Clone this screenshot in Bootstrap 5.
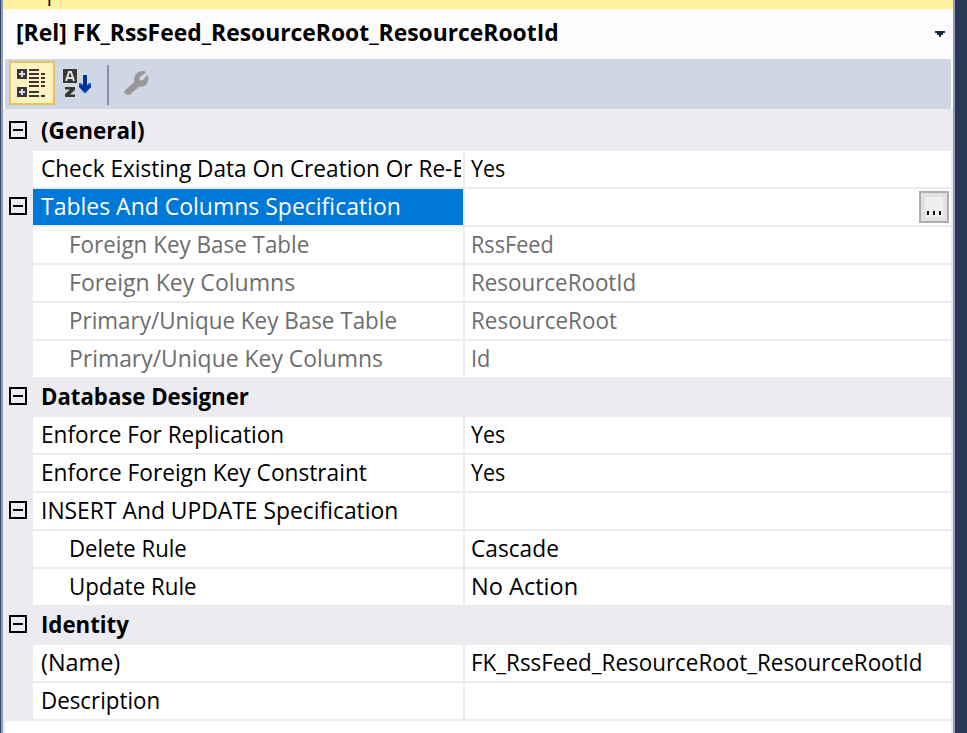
<!DOCTYPE html>
<html lang="en">
<head>
<meta charset="utf-8">
<meta name="viewport" content="width=device-width, initial-scale=1">
<title>Properties</title>
<link href="https://cdn.jsdelivr.net/npm/bootstrap@5.3.0/dist/css/bootstrap.min.css" rel="stylesheet">
<style>
body{background:#293955;font-family:"Open Sans","Noto Sans",sans-serif;font-size:24px;line-height:36px;color:#000}
.pane{width:955px;height:733px;background:#fff;border-left:3px solid #8e9bbc;border-right:2px solid #8e9bbc}
.pane::before{content:"";position:absolute;left:-3px;top:0;width:1px;height:733px;background:#35496a}
.title-strip{height:9px;background:#fff09c;line-height:20px}
.title-strip span{position:absolute;left:11px;top:-19px}
.object-bar{height:50px;background:#fcfcfc;padding-left:13px;padding-right:6px;padding-bottom:2px;border-bottom:2px solid #fff;margin-right:2px}
.tools{height:50px;background:#cfd6e5;margin:0 2px;padding-bottom:2px}
.cat-btn{width:46px;height:44px;margin-left:4px;padding-right:2px;background:#fff2be;border:2px solid #e5c365}
.grid-area{background:#ececf0;line-height:34px}
.rest{height:12px;background:#fff;margin:0 2px}
.gutter{width:30px;flex:none;padding-left:6px;padding-bottom:2px}
.category .gutter{padding-bottom:4px}
.prop{height:38px;border-bottom:2px solid #ececf0;margin-right:2px}
.prop.category{border:0}
.prop.category:first-child{height:42px;padding:4px 0 2px}
.category:first-child .gutter{padding-bottom:2px}
.label-cell{width:432px;flex:none;border-right:2px solid #ececf0;background:#fff;padding-left:8px}
.label-cell.sub{padding-left:36px}
.label-text{margin-right:2px}
.value-cell{background:#fff;padding-left:6px;min-width:0}
.value-cell .fit{margin-bottom:2px}
.label-cell.picked{background:#0078d7;color:#fff;background-clip:padding-box}
.dim{color:#6d6d6d}
.fit{display:inline-block;white-space:nowrap;transform-origin:0 50%}
.dots{width:30px;height:32px;background:#e1e1e1;border:2px solid #adadad;margin-right:2px}
svg{display:block;flex:none}
</style>
<script src="https://cdn.jsdelivr.net/npm/bootstrap@5.3.0/dist/js/bootstrap.bundle.min.js"></script>
</head>
<body class="m-0 overflow-hidden">
<main class="pane position-relative">
  <header class="title-strip overflow-hidden position-relative"><span class="fit" data-w="98">Properties</span></header>
  <div class="object-bar d-flex align-items-center justify-content-between">
    <span class="fit fw-bold" data-w="543">[Rel] FK_RssFeed_ResourceRoot_ResourceRootId</span>
    <svg class="mt-1" width="10" height="6" shape-rendering="crispEdges" fill="#1b293e"><path d="M0 0h10v2H8v2H6v2H4V4H2V2H0z"/></svg>
  </div>
  <div class="tools d-flex align-items-center">
    <div class="cat-btn d-flex align-items-center justify-content-center">
      <svg width="28" height="28" shape-rendering="crispEdges"><path fill="#383838" d="M0 0h10v10H0zM0 18h10v10H0zM12 0h10v2H12zM12 4h10v2H12zM12 8h10v2H12zM12 12h10v2H12zM12 16h10v2H12zM12 22h10v2H12zM12 26h10v2H12zM24 4h4v2h-4zM24 8h4v2h-4zM24 12h4v2h-4zM24 16h4v2h-4zM24 26h4v2h-4z"/><path fill="#dcdcdf" d="M4 2h2v2h2v2H6v2H4V6H2V4h2zM4 20h2v2h2v2H6v2H4v-2H2v-2h2z"/></svg>
    </div>
    <svg class="ms-2 overflow-visible" width="28" height="28"><path fill="none" stroke="#dcdcdc" stroke-width="3" opacity=".7" d="M0 0h14v14H0zM2 18h10v3l-6 5h6v2H2v-3l6-5H2z"/><path fill="#383838" d="M0 0h14v14H0zM2 18h10v3l-5 4.500h5V28H2v-3l5-4.500H2z"/><path fill="none" stroke="#e0e0e0" stroke-width="2" d="M3 12L6 3h2l3 9M4.500 9h5"/><path fill="#1c66c8" d="M16 14h2l2 2v2h4v-2l2-2h2v4l-5 6h-2l-5-6z"/><path fill="#00339a" d="M20 6h4v11l2-1h2v2l-5 4h-2l-5-4v-2h2l2 1z"/></svg>
    <svg class="ms-3 mt-1" width="2" height="40"><path fill="#8591a8" d="M0 0h2v40H0z"/></svg>
    <svg class="ms-3 overflow-visible" width="24" height="24"><path fill="#98989b" stroke="#d5d5d9" stroke-width=".5" d="M-1 20l10-9C8 4 13-1 20 0l1 2-6 4v3h3l4-5h1c2 8-3 13-9 12l-9 8h-3l-3-2z"/></svg>
  </div>
  <section class="grid-area" id="properties"></section>
</main>
<script>
const rows = [
  ['category','(General)',104],
  ['item','Check Existing Data On Creation Or Re-E',424,'Yes',34],
  ['group','Tables And Columns Specification',360,'',0,'picked'],
  ['sub','Foreign Key Base Table',240,'RssFeed',83,'dim'],
  ['sub','Foreign Key Columns',226,'ResourceRootId',165,'dim'],
  ['sub','Primary/Unique Key Base Table',328,'ResourceRoot',146,'dim'],
  ['sub','Primary/Unique Key Columns',314,'Id',19,'dim'],
  ['category','Database Designer',208],
  ['item','Enforce For Replication',243,'Yes',34],
  ['item','Enforce Foreign Key Constraint',326,'Yes',34],
  ['group','INSERT And UPDATE Specification',357,'',0],
  ['sub','Delete Rule',118,'Cascade',88],
  ['sub','Update Rule',128,'No Action',107],
  ['category','Identity',88],
  ['item','(Name)',79,'FK_RssFeed_ResourceRoot_ResourceRootId',452],
  ['item','Description',119,'',0]
];
const minus = '<svg width="18" height="18" shape-rendering="crispEdges"><path fill="none" stroke="#000" stroke-width="2" d="M1 1h16v16H1zM4 9h10"/></svg>';
const fit = (text,w) => text ? `<span class="fit" data-w="${w}">${text}</span>` : '';
document.getElementById('properties').innerHTML = rows.map(([kind,label,w,value,vw,tone='']) => {
  const gutter = `<div class="gutter d-flex align-items-center">${kind==='category'||kind==='group'?minus:''}</div>`;
  if (kind==='category') return `<div class="prop category d-flex fw-bold">${gutter}<div class="ps-2">${fit(label,w)}</div></div>`;
  const button = tone==='picked' ? '<div class="dots ms-auto d-flex align-items-center justify-content-center"><svg width="18" height="20" shape-rendering="crispEdges"><path fill="#efefef" d="M0 0h18v20H0z"/><path d="M2 14h2v4H2zM8 14h2v4H8zM14 14h2v4h-2z"/></svg></div>' : '';
  return `<div class="prop d-flex">${gutter}<div class="label-cell ${kind==='sub'?'sub':''} ${tone}"><div class="label-text overflow-hidden">${fit(label,w)}</div></div><div class="value-cell flex-grow-1 d-flex align-items-center ${tone==='dim'?tone:''}">${fit(value,vw)}${button}</div></div>`;
}).join('') + '<div class="rest"></div>';
document.querySelectorAll('.fit').forEach(el => {
  el.style.transform = `scaleX(${el.dataset.w / el.offsetWidth})`;
});
</script>
</body>
</html>
